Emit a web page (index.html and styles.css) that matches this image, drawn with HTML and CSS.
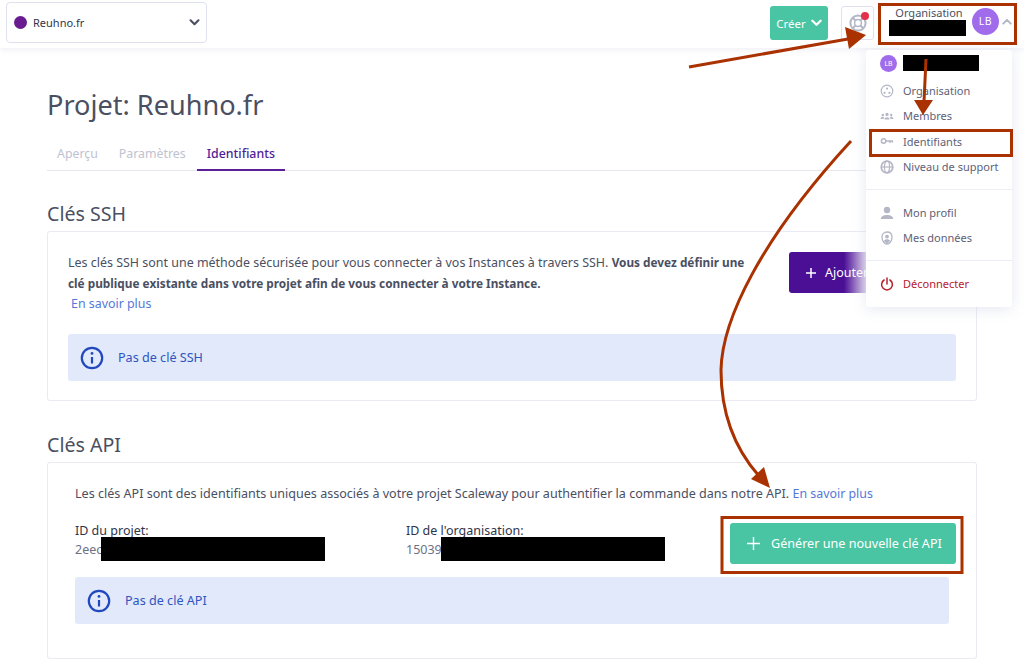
FILE: index.html
```html
<!DOCTYPE html>
<html lang="fr">
<head>
<meta charset="utf-8">
<title>Projet: Reuhno.fr</title>
<link rel="stylesheet" href="styles.css">
</head>
<body>
<div class="page">
  <header class="topbar">
    <div class="select">
      <span class="dot"></span>
      <span class="select-name">Reuhno.fr</span>
      <svg class="chev" width="11" height="7" viewBox="0 0 12 8"><path d="M1.5 1.500 6 6l4.500-4.500" fill="none" stroke="#4a4f62" stroke-width="2.400" stroke-linecap="round" stroke-linejoin="round"/></svg>
    </div>
    <div class="top-actions">
      <button class="create">Créer
        <svg width="11" height="8" viewBox="0 0 12 8"><path d="M1.500 1.500 6 6l4.500-4.500" fill="none" stroke="#fff" stroke-width="2.400" stroke-linecap="round" stroke-linejoin="round"/></svg>
      </button>
      <div class="help">
        <svg width="18" height="18" viewBox="0 0 18 18"><circle cx="9" cy="9" r="7.600" fill="none" stroke="#b4b7c6" stroke-width="2"/><circle cx="9" cy="9" r="3.400" fill="none" stroke="#b4b7c6" stroke-width="1.500"/><path d="M3.500 3.500l3 3M14.500 3.500l-3 3M3.500 14.500l3-3M14.500 14.500l-3-3" stroke="#b4b7c6" stroke-width="2"/></svg>
        <span class="badge"></span>
      </div>
      <div class="account">
        <div class="account-text">
          <span class="account-label">Organisation</span>
          <span class="redact account-redact"></span>
        </div>
        <span class="avatar">LB</span>
        <svg width="10" height="7" viewBox="0 0 12 8"><path d="M1.500 6.500 6 2l4.500 4.500" fill="none" stroke="#b4b7c6" stroke-width="2.400" stroke-linecap="round" stroke-linejoin="round"/></svg>
      </div>
    </div>
  </header>

  <main class="content">
    <h1 class="title">Projet: Reuhno.fr</h1>
    <nav class="tabs">
      <a class="tab">Aperçu</a>
      <a class="tab">Paramètres</a>
      <a class="tab active">Identifiants</a>
    </nav>

    <h2 class="section-title ssh-title">Clés SSH</h2>
    <section class="card card-ssh">
      <div class="ssh-head">
        <div class="ssh-text">
          <p>Les clés SSH sont une méthode sécurisée pour vous connecter à vos Instances à travers SSH. <strong>Vous devez définir une clé publique existante dans votre projet afin de vous connecter à votre Instance.</strong></p>
          <a class="link ssh-link">En savoir plus</a>
        </div>
        <button class="add">
          <svg width="12" height="12" viewBox="0 0 12 12"><path d="M6 1v10M1 6h10" stroke="#fff" stroke-width="1.500"/></svg>
          <span>Ajouter une clé</span>
        </button>
      </div>
      <div class="alert">
        <svg width="24" height="24" viewBox="0 0 24 24"><circle cx="12" cy="12" r="10.200" fill="none" stroke="#2148bd" stroke-width="2.200"/><circle cx="12" cy="7.400" r="1.400" fill="#2148bd"/><path d="M12 11v6.500" stroke="#2148bd" stroke-width="2.200"/></svg>
        <span>Pas de clé SSH</span>
      </div>
    </section>

    <h2 class="section-title api-title">Clés API</h2>
    <section class="card card-api">
      <p class="api-text">Les clés API sont des identifiants uniques associés à votre projet Scaleway pour authentifier la commande dans notre API. <a class="link">En savoir plus</a></p>
      <div class="api-row">
        <div class="id-col id-project">
          <div class="id-label">ID du projet:</div>
          <div class="id-value">2eec<span class="redact id-redact"></span></div>
        </div>
        <div class="id-col id-org">
          <div class="id-label">ID de l'organisation:</div>
          <div class="id-value">15039<span class="redact id-redact"></span></div>
        </div>
        <button class="generate">
          <svg width="13" height="13" viewBox="0 0 13 13"><path d="M6.500 0v13M0 6.500h13" stroke="#fff" stroke-width="1.400"/></svg>
          <span>Générer une nouvelle clé API</span>
        </button>
      </div>
      <div class="alert">
        <svg width="24" height="24" viewBox="0 0 24 24"><circle cx="12" cy="12" r="10.200" fill="none" stroke="#2148bd" stroke-width="2.200"/><circle cx="12" cy="7.400" r="1.400" fill="#2148bd"/><path d="M12 11v6.500" stroke="#2148bd" stroke-width="2.200"/></svg>
        <span>Pas de clé API</span>
      </div>
    </section>
  </main>

  <aside class="menu">
    <div class="menu-group menu-first">
      <div class="menu-user"><span class="avatar avatar-small">LB</span><span class="redact menu-redact"></span></div>
      <div class="menu-item"><svg width="14" height="14" viewBox="0 0 14 14"><circle cx="7" cy="7" r="5.800" fill="none" stroke="#b4b7c6" stroke-width="1.200"/><circle cx="7" cy="4.600" r="1.100" fill="#b4b7c6"/><circle cx="4.600" cy="8.800" r="1.100" fill="#b4b7c6"/><circle cx="9.400" cy="8.800" r="1.100" fill="#b4b7c6"/></svg><span>Organisation</span></div>
      <div class="menu-item"><svg width="14" height="14" viewBox="0 0 14 14"><g fill="#b4b7c6"><circle cx="7" cy="5.400" r="1.600"/><circle cx="2.800" cy="6" r="1.200"/><circle cx="11.200" cy="6" r="1.200"/><path d="M4.400 10.400c0-3 5.200-3 5.200 0zM.6 10c0-2.400 2.800-2.600 3.400-1.600l-.6 1.600zM13.400 10c0-2.400-2.800-2.600-3.400-1.600l.6 1.600z"/></g></svg><span>Membres</span></div>
      <div class="menu-item"><svg width="14" height="14" viewBox="0 0 14 14"><circle cx="3.600" cy="7" r="2.200" fill="none" stroke="#b4b7c6" stroke-width="1.500"/><path d="M6 7h7M10 7v2M12.400 7v1.600" stroke="#b4b7c6" stroke-width="1.500"/></svg><span>Identifiants</span></div>
      <div class="menu-item"><svg width="14" height="14" viewBox="0 0 14 14"><circle cx="7" cy="7" r="5.800" fill="none" stroke="#b4b7c6" stroke-width="1.700"/><ellipse cx="7" cy="7" rx="2.600" ry="5.800" fill="none" stroke="#b4b7c6" stroke-width="1.200"/><path d="M1.200 7h11.600" stroke="#b4b7c6" stroke-width="1.200"/></svg><span>Niveau de support</span></div>
    </div>
    <div class="menu-group menu-second">
      <div class="menu-item"><svg width="14" height="14" viewBox="0 0 14 14"><circle cx="7" cy="4" r="3.200" fill="#b4b7c6"/><path d="M.8 13c0-5.200 12.400-5.200 12.400 0z" fill="#b4b7c6"/></svg><span>Mon profil</span></div>
      <div class="menu-item"><svg width="14" height="14" viewBox="0 0 14 14"><path d="M7 1c3 0 5 2 5 5 0 4-2.500 7-5 7s-5-3-5-7c0-3 2-5 5-5z" fill="none" stroke="#b4b7c6" stroke-width="1.300"/><circle cx="7" cy="5.600" r="1.900" fill="#b4b7c6"/><path d="M3.800 10c1-2.400 5.400-2.400 6.400 0L7 12.400z" fill="#b4b7c6"/></svg><span>Mes données</span></div>
    </div>
    <div class="menu-group menu-third">
      <div class="menu-item danger"><svg width="14" height="14" viewBox="0 0 14 14"><path d="M4.100 3a5.400 5.400 0 1 0 5.800 0" fill="none" stroke="#b7202e" stroke-width="1.500" stroke-linecap="round"/><path d="M7 1v6" stroke="#b7202e" stroke-width="1.500" stroke-linecap="round"/></svg><span>Déconnecter</span></div>
    </div>
  </aside>

  <svg class="annotations" width="1024" height="661" viewBox="0 0 1024 661">
    <g fill="none" stroke="#a93200" stroke-width="3">
      <rect x="879.500" y="4.500" width="136" height="39"/>
      <rect x="870.500" y="130.500" width="141" height="25"/>
      <rect x="722" y="517.500" width="240" height="55"/>
      <path d="M689 67 848 39"/>
      <path d="M926 59 924 102"/>
      <path d="M851 141C760 240 722 320 721 370c0 45 15 80 38 106"/>
    </g>
    <g fill="#a93200">
      <path d="M866 35 845 27 849 49z"/>
      <path d="M923 115 914 100 933 100z"/>
      <path d="M770 488 751 479 764 467z"/>
    </g>
  </svg>
</div>
</body>
</html>
```
FILE: styles.css
```css
* { box-sizing: border-box; }
html, body { margin: 0; padding: 0; background: #fff; }
body { font-family: "Noto Sans", "Open Sans", sans-serif; color: #4a4f62; font-size: 12px; }
.page { position: relative; width: 1024px; height: 661px; overflow: hidden; }
p { margin: 0; }
button { font-family: inherit; border: 0; }

.topbar { height: 48px; display: flex; justify-content: space-between; padding: 2px 8px 0 6px; box-shadow: 0 2px 6px rgba(220, 222, 235, .45); position: relative; }
.select { width: 201px; height: 41px; border: 1px solid #dfe1ee; border-radius: 4px; display: flex; align-items: center; padding: 0 6px 0 7px; }
.dot { width: 13px; height: 13px; border-radius: 50%; background: #6a1b8f; }
.select-name { margin-left: 6px; font-size: 11px; color: #30344a; flex: 1; }
.top-actions { display: flex; align-items: flex-start; }
.create { margin-top: 4px; width: 58px; height: 34px; border-radius: 3px; background: #4ac5a3; color: #fff; font-size: 11.500px; display: flex; align-items: center; justify-content: center; gap: 5px; padding: 0; }
.help { margin: 4px 0 0 13px; width: 33px; height: 34px; border: 1px solid #dfe1ee; border-radius: 3px; position: relative; display: flex; align-items: center; justify-content: center; }
.badge { position: absolute; right: 4px; top: 5px; width: 8px; height: 8px; border-radius: 50%; background: #e5304a; }
.account { display: flex; align-items: center; margin-left: 6px; width: 136px; height: 38px; padding-left: 8px; }
.account-text { width: 84px; display: flex; flex-direction: column; align-items: center; }
.account-label { font-size: 11px; line-height: 15px; color: #4a4f62; margin-top: -1px; margin-left: -2px; }
.avatar { width: 27px; height: 27px; border-radius: 50%; background: #a06cec; color: #fff; font-size: 10.500px; display: inline-flex; align-items: center; justify-content: center; margin-right: 3px; letter-spacing: .5px; }
.redact { display: inline-block; background: #000; }
.account-redact { width: 77px; height: 16px; margin-left: -5px; }

.content { padding: 0 47px; }
.title { margin: 37px 0 0; font-size: 27.100px; line-height: 40px; font-weight: 400; color: #4a4f62; }
.tabs { margin-top: 17px; height: 29px; border-bottom: 1px solid #e5e6f0; display: flex; gap: 1px; }
.tab { padding: 0 10px; height: 29px; line-height: 24px; font-size: 12.350px; color: #c0c2d0; }
.tab.active { color: #4f1d96; border-bottom: 2px solid #5b1f9a; font-weight: 500; }
.section-title { margin: 0; font-weight: 400; font-size: 19.600px; line-height: 26px; color: #4a4f62; }
.ssh-title { margin-top: 30px; }
.api-title { margin-top: 31px; }
.card { border: 1px solid #e9eaf3; border-radius: 3px; margin-top: 4px; }
.card-ssh { height: 170px; padding: 20px 20px 0; }
.card-api { height: 197px; padding: 22px 27px 0; }
.ssh-head { display: flex; justify-content: space-between; }
.ssh-text { width: 690px; font-size: 12.460px; line-height: 20px; color: #4a4f62; }
.ssh-text strong { font-weight: 700; font-size: 11.800px; }
.link { color: #5578d8; font-size: 12.400px; }
.ssh-link { margin-left: 3px; }
.add { position: relative; width: 165px; height: 41px; background: #4b0f96; border-radius: 3px; color: #fff; font-size: 12.500px; display: flex; align-items: center; gap: 8px; padding: 0 16px; margin-right: 2px; flex: none; white-space: nowrap; }
.add::after { content: ""; position: absolute; left: 55px; top: 0; width: 22px; height: 41px; background: linear-gradient(90deg, rgba(255, 255, 255, 0), rgba(255, 255, 255, .8)); }
.alert { display: flex; align-items: center; gap: 14px; background: #e1e9fb; border-radius: 3px; height: 47px; padding-left: 12px; font-size: 12.600px; color: #2f55c0; }
.card-ssh .alert { margin-top: 20px; width: 888px; }
.card-api .alert { margin-top: 13px; width: 874px; }
.api-text { font-size: 12.550px; line-height: 18px; color: #4a4f62; }
.api-row { display: flex; margin-top: 20px; height: 41px; width: 881px; }
.id-col { font-size: 12.500px; flex: none; }
.id-project { width: 331px; }
.id-org { width: 324px; }
.id-label { color: #30344a; line-height: 17px; margin-top: -1px; }
.id-value { color: #6d7186; line-height: 20px; display: flex; align-items: center; }
.id-redact { width: 224px; height: 24px; margin: -2px 0 0 -1px; }
.generate { width: 226px; height: 41px; background: #4ac5a3; border-radius: 3px; color: #fff; font-size: 12.600px; display: flex; align-items: center; gap: 11px; padding: 0 0 0 17px; white-space: nowrap; flex: none; }

.menu { position: absolute; left: 866px; top: 50px; width: 146px; height: 257px; background: #fff; border-radius: 3px; box-shadow: 0 2px 14px rgba(200, 203, 225, .45); }
.menu-group { padding: 0 13px; }
.menu-first { height: 140px; border-bottom: 1px solid #ecedf5; padding-top: 4px; }
.menu-second { height: 71px; padding-top: 10px; border-bottom: 1px solid #ecedf5; }
.menu-third { padding-top: 10px; }
.menu-user { display: flex; align-items: center; height: 18px; margin-bottom: 6px; }
.avatar-small { width: 17px; height: 17px; font-size: 7px; margin: 0 6px 0 1px; letter-spacing: 0; flex: none; }
.menu-redact { width: 76px; height: 16px; margin-left: 0; }
.menu-item { display: flex; align-items: center; gap: 9px; height: 25.300px; font-size: 11px; color: #5d6177; white-space: nowrap; padding-left: 1px; }
.menu-item.danger { color: #b7202e; }

.annotations { position: absolute; left: 0; top: 0; pointer-events: none; }
```
